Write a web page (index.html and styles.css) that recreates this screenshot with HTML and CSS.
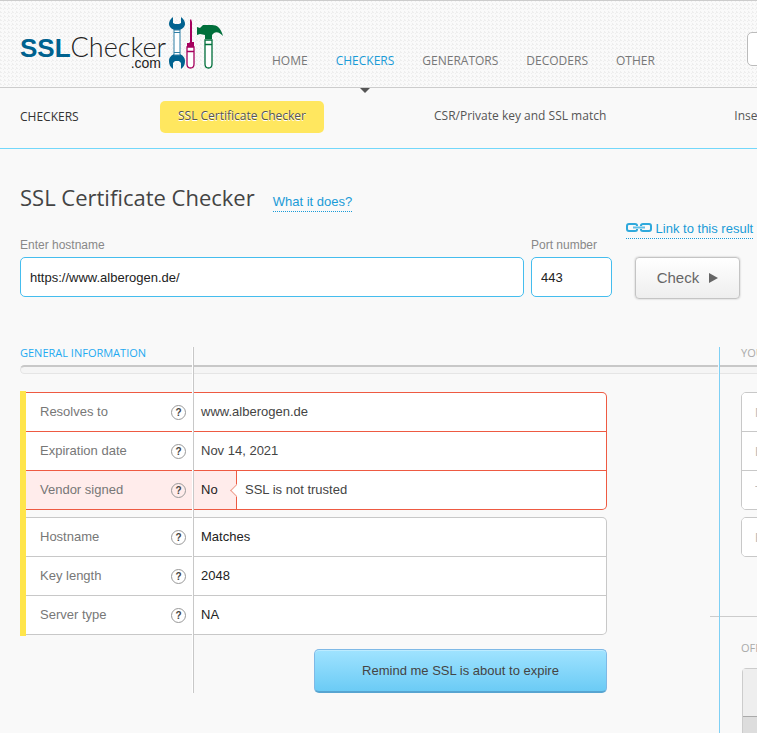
FILE: index.html
```html
<!DOCTYPE html>
<html lang="en">
<head>
    <meta charset="UTF-8">
    <meta name="viewport" content="width=device-width, initial-scale=1.0">
    <title>SSL Certificate Checker</title>
    <link rel="stylesheet" href="styles.css">
</head>
<body>
    <header class="header">
        <div class="wrap header-row">
            <a href="#" class="logo" aria-label="SSLChecker.com">
                <span class="logo-text">
                    <span class="logo-name"><b>SSL</b>Checker</span>
                    <span class="logo-com">.com</span>
                </span>
                <svg class="logo-tools" width="56" height="54" viewBox="0 0 56 54" aria-hidden="true">
                    <g fill="#00628f">
                        <path d="M4 1C1 3 0 6 0 8c0 3 3 5 5 6h6c2-1 5-3 5-6 0-2-1-5-4-7v6l-2 1H6L4 7z"/>
                        <path d="M4 53C1 51 0 48 0 45c0-4 3-6 5-7h6c2 1 5 3 5 7 0 3-1 6-4 8v-6l-2-2H6l-2 2z"/>
                    </g>
                    <path d="M5 14h6v25H5zM5 16.500h6M5 36.500h6" fill="#fff" stroke="#2f7fa5"/>
                    <path d="M21 4l1-1 1 3v20h2v5h-7v-4h2l1-1z" fill="#a5005d"/>
                    <path d="M18 31h7v17q0 4-3.500 4T18 48zM18 35.500h7" fill="#fff" stroke="#a5005d" stroke-width="1.300"/>
                    <path d="M28 11l3 1 3-3h9c5 0 9 3 11 11-3-3-6-5-9-3l-2 2v4h-7v-4l-5-1-3 1z" fill="#006f3b"/>
                    <path d="M36 24h7v24q0 4-3.500 4T36 48zM36 28.500h7" fill="#fff" stroke="#006f3b" stroke-width="1.300"/>
                </svg>
            </a>
            <nav class="nav">
                <a href="#">HOME</a>
                <a href="#" class="active">CHECKERS</a>
                <a href="#">GENERATORS</a>
                <a href="#">DECODERS</a>
                <a href="#">OTHER</a>
            </nav>
            <input type="text" class="search" aria-label="Search">
        </div>
    </header>

    <div class="subnav">
        <nav class="wrap subnav-row">
            <span class="subnav-title">CHECKERS</span>
            <a href="#" class="active">SSL Certificate Checker</a>
            <a href="#">CSR/Private key and SSL match</a>
            <a href="#">Insecure content checker</a>
        </nav>
    </div>

    <main class="wrap">
        <div class="title">
            <h1>SSL Certificate Checker</h1>
            <a href="#" class="dotted">What it does?</a>
        </div>

        <form class="form">
            <div class="field host">
                <label for="host">Enter hostname</label>
                <input type="text" id="host" value="https://www.alberogen.de/">
            </div>
            <div class="field port">
                <label for="port">Port number</label>
                <input type="text" id="port" value="443">
            </div>
            <div class="actions">
                <a href="#" class="dotted">
                    <svg width="26" height="10" viewBox="0 0 26 10" fill="none" stroke="#2fa9dc" stroke-width="2" aria-hidden="true">
                        <path d="M11 3V2.500Q11 1 9 1H3Q1 1 1 3v3q0 2 2 2h6q2 0 2-1.500V6M15 3v-.500Q15 1 17 1h6q2 0 2 2v3q0 2-2 2h-6q-2 0-2-1.500V6"/>
                        <path d="M7 4.500h12" stroke="#63bfe6"/>
                    </svg>
                    Link to this result
                </a>
                <button type="button" class="check">Check
                    <svg width="9" height="10" viewBox="0 0 9 10" aria-hidden="true"><path d="M0 0l9 5-9 5z" fill="#666"/></svg>
                </button>
            </div>
        </form>

        <div class="columns">
            <section class="info">
                <h2>GENERAL INFORMATION</h2>
                <div class="bar"></div>
                <div class="results">
                    <table class="bad">
                        <tr><th>Resolves to <button type="button" class="help">?</button></th><td>www.alberogen.de</td></tr>
                        <tr><th>Expiration date <button type="button" class="help">?</button></th><td>Nov 14, 2021</td></tr>
                        <tr class="alert"><th>Vendor signed <button type="button" class="help">?</button></th><td><div class="verdict"><b>No</b><span>SSL is not trusted</span></div></td></tr>
                    </table>
                    <table>
                        <tr><th>Hostname <button type="button" class="help">?</button></th><td>Matches</td></tr>
                        <tr><th>Key length <button type="button" class="help">?</button></th><td>2048</td></tr>
                        <tr><th>Server type <button type="button" class="help">?</button></th><td>NA</td></tr>
                    </table>
                </div>
                <button type="button" class="remind">Remind me SSL is about to expire</button>
            </section>

            <aside class="side">
                <h2>YOUR DETAILS</h2>
                <div class="bar"></div>
                <div class="inputs">
                    <input type="text" placeholder="Name" aria-label="Name">
                    <input type="text" placeholder="Email" aria-label="Email">
                    <input type="text" placeholder="Telephone" aria-label="Telephone">
                </div>
                <div class="inputs">
                    <input type="text" placeholder="Reminder" aria-label="Reminder">
                </div>
                <hr>
                <h2>OFFERS</h2>
                <div class="offer">
                    <div class="offer-top"></div>
                    <div class="offer-body"></div>
                </div>
            </aside>
        </div>
    </main>
</body>
</html>
```
FILE: styles.css
```css
* {
    box-sizing: border-box;
}
body {
    margin: 0;
    background: #f9f9f9;
    color: #444;
    font-family: "Liberation Sans", Arial, sans-serif;
    font-size: 13px;
    line-height: 16px;
    overflow-x: hidden;
}
a {
    color: #1a9bd7;
    text-decoration: none;
}
button, input {
    font: inherit;
}
h1, h2 {
    margin: 0;
    font-weight: normal;
}
.wrap {
    min-width: 980px;
    padding: 0 20px;
}

/* header */
.header {
    border-top: 1px solid #ccc;
    border-bottom: 1px solid #ccc;
    background: #fafafa linear-gradient(45deg, #eee 25%, transparent 25% 75%, #eee 75%) 0 0 / 4px 4px;
}
.header-row {
    display: flex;
    height: 86px;
}
.logo {
    display: flex;
    flex-shrink: 0;
    width: 252px;
    padding-top: 15px;
    color: #222;
}
.logo-text {
    display: flex;
    flex-direction: column;
    width: 149px;
    padding-top: 15px;
}
.logo-name {
    font-family: Lato, sans-serif;
    font-weight: 300;
    font-size: 27px;
    line-height: 32px;
}
.logo-name b {
    color: #00628f;
    font-family: "Liberation Sans", Arial, sans-serif;
    font-size: 26px;
    font-weight: bold;
}
.logo-com {
    margin-top: -8px;
    padding-right: 8px;
    font-size: 14px;
    line-height: 14px;
    text-align: right;
}
.nav {
    display: flex;
    gap: 28px;
    font-family: "Open Sans", sans-serif;
    font-size: 12px;
}
.nav a {
    position: relative;
    padding-top: 52px;
    color: #777;
}
.nav .active {
    color: #1a9bd7;
}
.nav .active::after {
    content: "";
    position: absolute;
    top: 87px;
    left: 50%;
    margin-left: -5px;
    border: 5px solid transparent;
    border-top-color: #555;
    border-bottom: 0;
}
.search {
    flex: 1;
    align-self: flex-start;
    height: 34px;
    margin: 31px 0 0 92px;
    border: 1px solid #bbb;
    border-radius: 5px;
    background: #fff;
}

/* second level navigation */
.subnav {
    border-bottom: 1px solid #73d8fb;
    font-family: "Open Sans", sans-serif;
    font-size: 12px;
}
.subnav-row {
    display: flex;
    align-items: center;
    height: 60px;
    padding-bottom: 2px;
}
.subnav-title {
    flex-shrink: 0;
    width: 140px;
    color: #333;
}
.subnav-row a {
    flex-shrink: 0;
    margin-right: 92px;
    padding: 7px 18px 9px;
    color: #555;
}
.subnav-row .active {
    border-radius: 5px;
    background: #ffe75f;
    text-shadow: 0 1px 0 #fff;
}

/* title and form */
.title {
    display: flex;
    align-items: baseline;
    gap: 18px;
    padding-top: 32px;
}
h1 {
    font-family: "Open Sans", sans-serif;
    font-size: 22px;
    line-height: 32px;
}
.dotted {
    padding-bottom: 1px;
    border-bottom: 1px dotted #1a9bd7;
    line-height: 17px;
}
.form {
    display: flex;
    align-items: flex-end;
    padding-top: 7px;
}
.field label {
    display: block;
    margin-bottom: 4px;
    color: #888;
    font-size: 12px;
}
.field input {
    display: block;
    width: 100%;
    height: 40px;
    padding: 0 9px;
    border: 1px solid #45bdee;
    border-radius: 5px;
    background: #fff;
    color: #222;
}
.host {
    width: 504px;
    margin-right: 7px;
}
.port {
    width: 81px;
    margin-right: 14px;
}
.actions {
    display: flex;
    flex-direction: column;
    gap: 18px;
}
.check {
    width: 105px;
    height: 42px;
    margin: 0 0 -2px 9px;
    border: 1px solid #c4c4c4;
    border-radius: 4px;
    background: linear-gradient(#fff, #eee);
    box-shadow: 0 0 2px #bbb;
    color: #666;
    font-size: 15px;
}
.check svg {
    margin-left: 6px;
}

/* results */
.columns {
    display: grid;
    grid-template-columns: 700px 1fr;
    padding-top: 50px;
}
h2 {
    color: #aaa;
    font-family: "Open Sans", sans-serif;
    font-size: 11px;
    line-height: 12px;
}
.bar {
    height: 9px;
    border: 1px solid #e5e5e5;
    border-top: 2px solid #c8c8c8;
    border-right: 0;
    border-radius: 5px 0 0 5px;
    background: #f5f5f5;
}
.info {
    position: relative;
    min-height: 386px;
    padding-right: 1px;
    border-right: 1px solid #7fd0f5;
}
/* divider between names and values */
.info::after {
    content: "";
    position: absolute;
    top: 0;
    left: 172px;
    width: 1px;
    height: 346px;
    border-left: 1px solid #fff;
    background: #c8c8c8;
}
.info h2 {
    color: #1eaaf1;
}
.info h2, .side h2 {
    padding-bottom: 6px;
}
.results {
    width: 587px;
    margin-top: 17px;
    border-left: 6px solid #ffe54b;
    padding: 1px 0;
}
table {
    width: 100%;
    border: 1px solid #c8c8c8;
    border-left: 0;
    border-radius: 0 5px 5px 0;
    border-spacing: 0;
    background: #fff;
}
table + table {
    margin-top: 7px;
    color: #222;
}
th, td {
    height: 39px;
    padding: 0 8px;
    border-bottom: 1px solid #c8c8c8;
}
tr:last-child > * {
    height: 38px;
    border-bottom: 0;
}
th {
    width: 167px;
    padding: 0 7px 0 14px;
    color: #777;
    font-weight: normal;
    text-align: left;
}
.bad, .bad th, .bad td {
    border-color: #ee5a42;
}
.help {
    float: right;
    width: 15px;
    height: 15px;
    margin-top: 1px;
    padding: 0;
    border: 1px solid #999;
    border-radius: 50%;
    background: #fff;
    color: #444;
    font-size: 10px;
    font-weight: bold;
    line-height: 13px;
}
.alert th, .verdict b, .alert .help {
    background: #ffeceb;
}
tr.alert > td {
    padding: 0;
}
.verdict {
    display: flex;
    line-height: 38px;
}
.verdict b {
    position: relative;
    width: 44px;
    padding-left: 8px;
    border-right: 1px solid #ee5a42;
    color: #222;
    font-weight: normal;
}
.verdict b::after {
    content: "";
    position: absolute;
    top: 15px;
    right: -5px;
    width: 8px;
    height: 8px;
    border: solid #ee9a8a;
    border-width: 0 0 1px 1px;
    background: #fff;
    transform: rotate(45deg);
}
.verdict span {
    padding-left: 8px;
}
.remind {
    display: block;
    width: 293px;
    height: 44px;
    margin: 13px 0 40px 294px;
    border: 1px solid #7fb9e6;
    border-bottom: 2px solid #58a5d1;
    border-radius: 5px;
    background: linear-gradient(#a0e3ff, #6bcbf5);
    box-shadow: inset 0 1px #bcebff;
    color: #444;
}

/* sidebar */
.side h2 {
    padding-left: 21px;
}
.side .bar {
    border-left: 0;
    border-radius: 0;
}
.inputs {
    margin: 18px 0 0 21px;
    border: 1px solid #c8c8c8;
    border-radius: 5px;
    background: #fff;
    overflow: hidden;
}
.inputs + .inputs {
    margin-top: 7px;
}
.inputs input {
    display: block;
    width: 100%;
    height: 39px;
    padding: 0 13px;
    border: 0;
    border-bottom: 1px solid #c8c8c8;
}
.inputs input:last-child {
    height: 38px;
    border-bottom: 0;
}
.inputs input::placeholder {
    color: #bbb;
}
.side hr {
    margin: 59px 0 25px -10px;
    border: 0;
    border-top: 1px solid #ccc;
}
.offer {
    margin: 8px 0 0 22px;
    border: 1px solid #ccc;
    border-radius: 4px;
    background: #ddd;
}
.offer-top {
    height: 48px;
    border-bottom: 1px solid #aaa;
    background: #eee;
}
.offer-body {
    height: 60px;
}
```
